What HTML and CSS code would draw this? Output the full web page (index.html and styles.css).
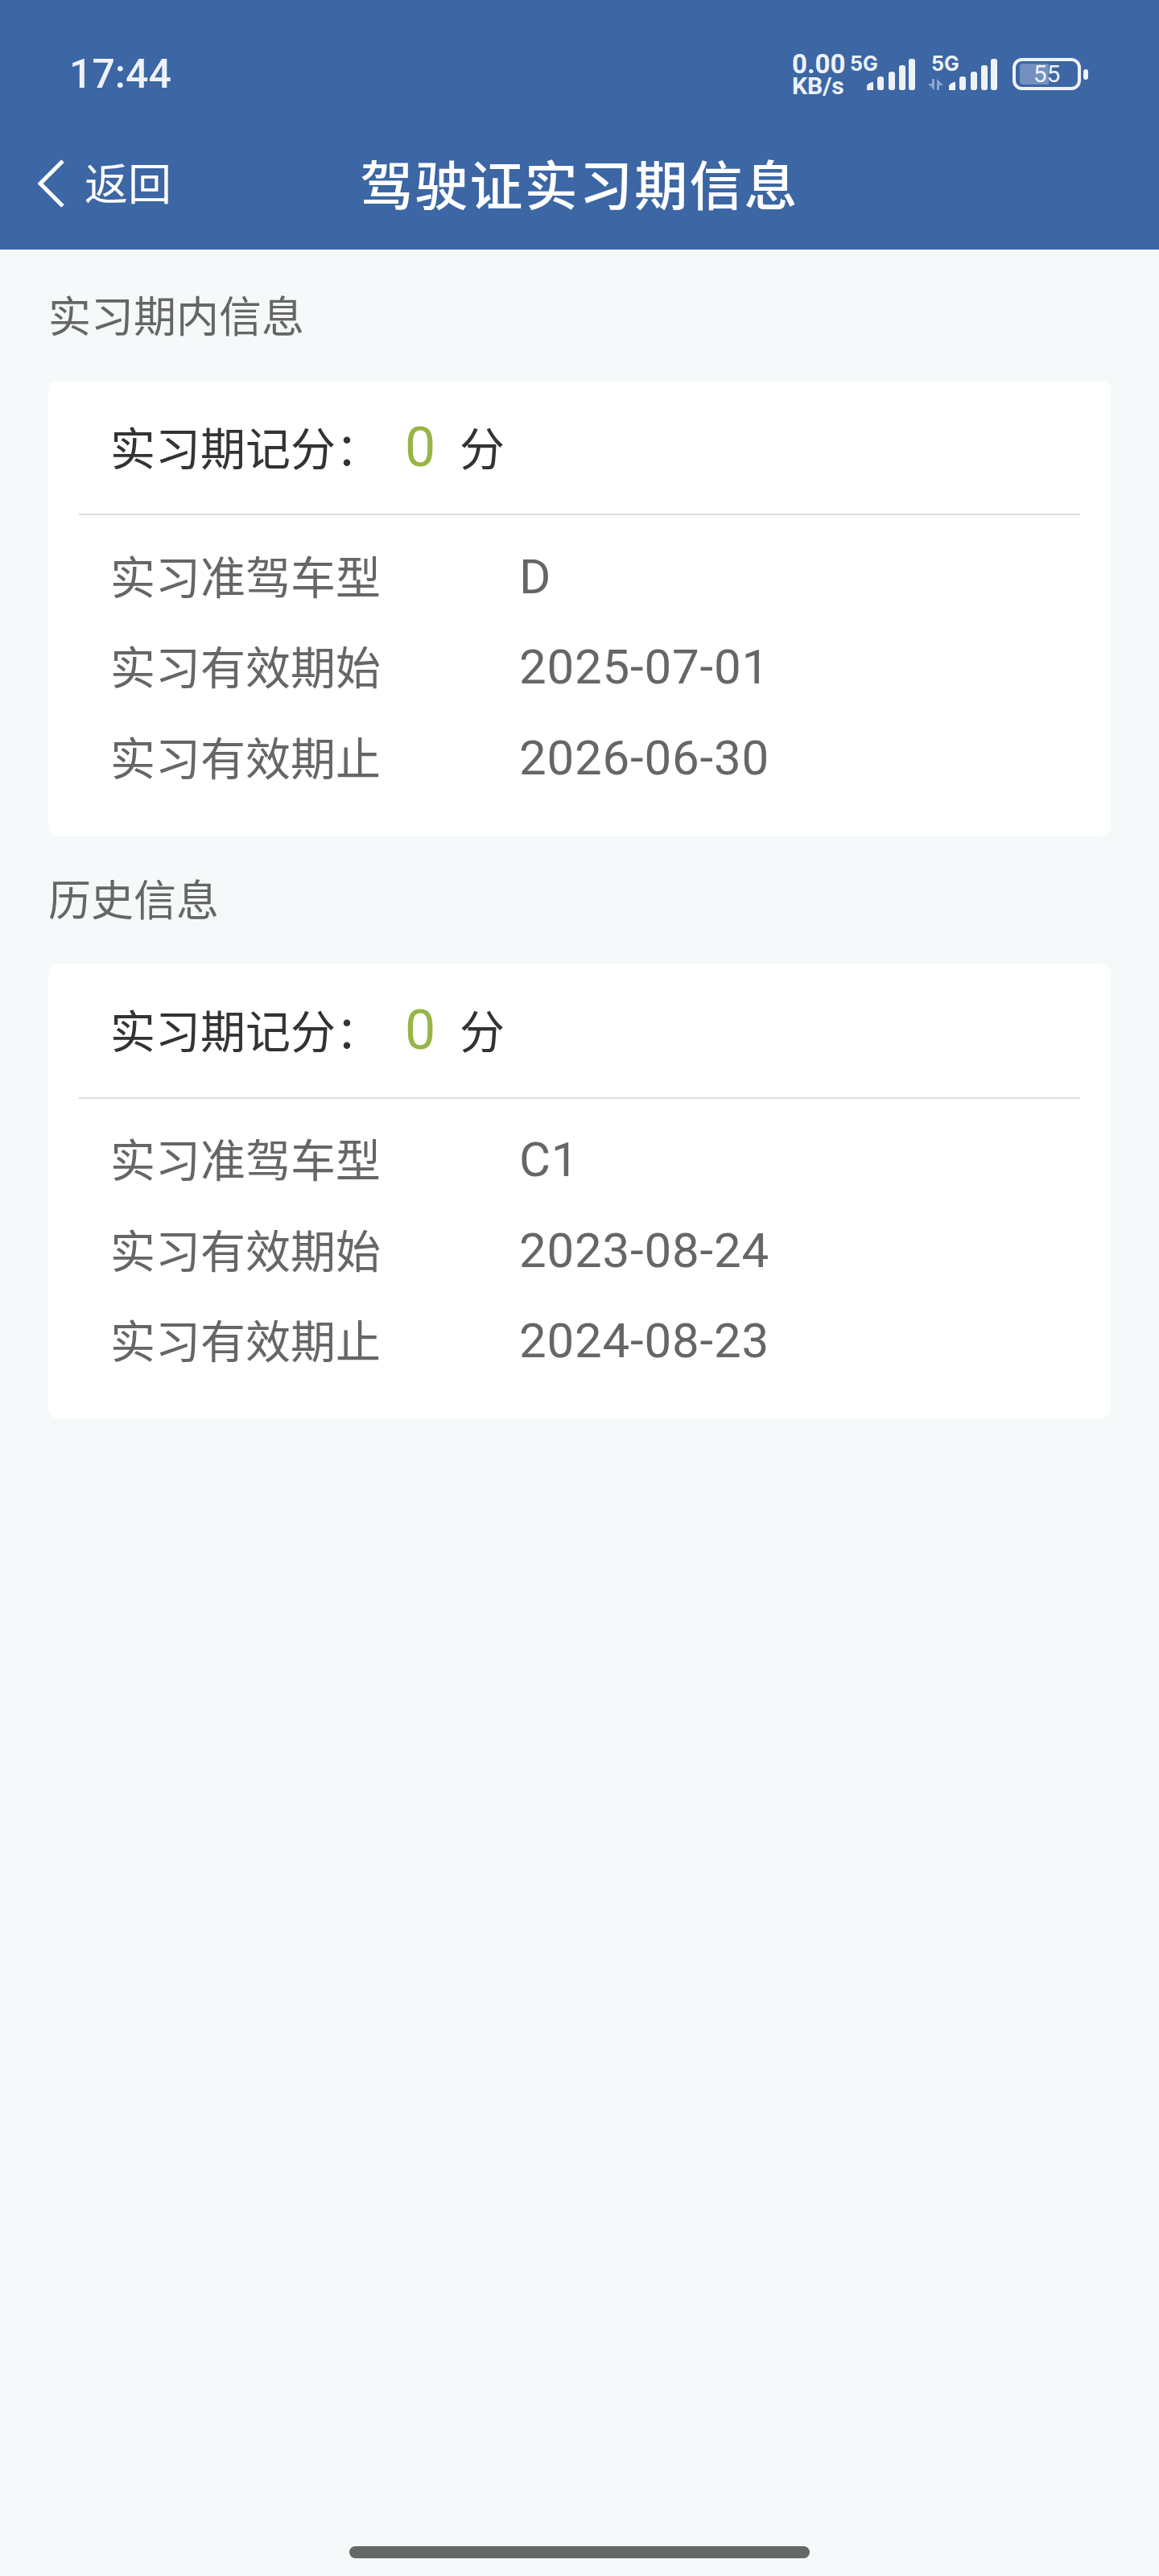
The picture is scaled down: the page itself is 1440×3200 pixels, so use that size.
FILE: index.html
```html
<!DOCTYPE html>
<html lang="zh-CN">
<head>
    <meta charset="UTF-8">
    <meta name="viewport" content="width=device-width, initial-scale=1.0">
    <title>驾驶证实习期信息</title>
    <link rel="stylesheet" href="styles.css">
</head>
<body>
    <header class="top-bar">
        <div class="status-bar">
            <span class="clock">17:44</span>
            <div class="status-icons">
                <div class="speed"><span class="speed-num">0.00</span><span class="speed-unit">KB/s</span></div>
                <div class="sim sim-first">
                    <span class="sim-label">5G</span>
                    <svg class="bars" width="60" height="40" viewBox="0 0 60 40">
                        <path d="M0 40v-5q0-2 2-3l4-2q2-1 2 1v9z" fill="#eef2f9"/>
                        <rect x="13" y="23" width="8" height="17" rx="3" fill="#eef2f9"/>
                        <rect x="27" y="17" width="8" height="23" rx="3" fill="#eef2f9"/>
                        <rect x="40" y="9" width="8" height="31" rx="3" fill="#eef2f9"/>
                        <rect x="52" y="1" width="8" height="39" rx="3" fill="#eef2f9"/>
                    </svg>
                </div>
                <div class="sim sim-second">
                    <span class="sim-label">5G</span>
                    <svg class="arrows" width="19" height="14" viewBox="0 0 19 14">
                        <path d="M8 0v14L0 6h5V0z M11 14V0l8 8h-5v6z" fill="#8ea5cd"/>
                    </svg>
                    <svg class="bars" width="60" height="40" viewBox="0 0 60 40">
                        <path d="M0 40v-5q0-2 2-3l4-2q2-1 2 1v9z" fill="#eef2f9"/>
                        <rect x="13" y="23" width="8" height="17" rx="3" fill="#eef2f9"/>
                        <rect x="27" y="17" width="8" height="23" rx="3" fill="#eef2f9"/>
                        <rect x="40" y="9" width="8" height="31" rx="3" fill="#eef2f9"/>
                        <rect x="52" y="1" width="8" height="39" rx="3" fill="#eef2f9"/>
                    </svg>
                </div>
                <div class="battery">
                    <div class="battery-body">
                        <div class="battery-level"></div>
                        <span class="battery-num">55</span>
                    </div>
                    <div class="battery-cap"></div>
                </div>
            </div>
        </div>
        <nav class="nav-bar">
            <a class="back">
                <svg width="38" height="66" viewBox="0 0 38 66">
                    <path d="M34 5 L6 33 L34 61" fill="none" stroke="#fff" stroke-width="5"/>
                </svg>
                <span>返回</span>
            </a>
            <h1>驾驶证实习期信息</h1>
        </nav>
    </header>

    <main>
        <h2 class="section-title">实习期内信息</h2>
        <section class="card">
            <div class="score-row">
                <span class="score-label">实习期记分：</span>
                <span class="score-num">0</span>
                <span class="score-unit">分</span>
            </div>
            <div class="info-rows">
                <div class="info-row"><span class="info-key">实习准驾车型</span><span class="info-val">D</span></div>
                <div class="info-row"><span class="info-key">实习有效期始</span><span class="info-val">2025-07-01</span></div>
                <div class="info-row"><span class="info-key">实习有效期止</span><span class="info-val">2026-06-30</span></div>
            </div>
        </section>

        <h2 class="section-title">历史信息</h2>
        <section class="card">
            <div class="score-row">
                <span class="score-label">实习期记分：</span>
                <span class="score-num">0</span>
                <span class="score-unit">分</span>
            </div>
            <div class="info-rows">
                <div class="info-row"><span class="info-key">实习准驾车型</span><span class="info-val">C1</span></div>
                <div class="info-row"><span class="info-key">实习有效期始</span><span class="info-val">2023-08-24</span></div>
                <div class="info-row"><span class="info-key">实习有效期止</span><span class="info-val">2024-08-23</span></div>
            </div>
        </section>
    </main>

    <div class="home-bar"></div>
</body>
</html>
```

FILE: styles.css
```css
* {
    box-sizing: border-box;
}
body {
    font-family: "Noto Sans CJK SC", Roboto, sans-serif;
    background-color: #f5f9fa;
    margin: 0;
    width: 1440px;
    height: 3200px;
    display: flex;
    flex-direction: column;
}
.top-bar {
    background-color: #3c66a4;
    height: 310px;
    color: #fff;
}
.status-bar {
    height: 146px;
    padding: 62px 88px 0 86px;
    display: flex;
    justify-content: space-between;
    align-items: flex-start;
}
.clock {
    font-family: Roboto, sans-serif;
    font-weight: 500;
    font-size: 50px;
    line-height: 60px;
    color: #eef2f9;
}
.status-icons {
    display: flex;
    align-items: flex-start;
    color: #eef2f9;
    font-family: Roboto, sans-serif;
    font-weight: 700;
}
.speed {
    display: flex;
    flex-direction: column;
    line-height: 27px;
    margin-top: 4px;
    width: 72px;
}
.speed-num {
    font-size: 33px;
}
.speed-unit {
    font-size: 30px;
}
.sim {
    display: flex;
    align-items: flex-end;
    justify-content: flex-end;
    position: relative;
    height: 42px;
    margin-top: 8px;
}
.sim-first {
    width: 81px;
}
.sim-second {
    width: 86px;
    margin-left: 16px;
}
.sim-second .sim-label {
    left: 4px;
}
.sim-label {
    position: absolute;
    left: 0;
    top: -5px;
    font-family: Inter, Roboto, sans-serif;
    font-size: 25px;
    line-height: 28px;
}
.arrows {
    margin-right: 7px;
}
.battery {
    display: flex;
    align-items: center;
    margin-left: 19px;
    margin-top: 10px;
}
.battery-body {
    width: 85px;
    height: 40px;
    border: 4px solid #eef2f9;
    border-radius: 12px;
    position: relative;
    padding: 3px 5px;
}
.battery-level {
    width: 36px;
    height: 100%;
    background-color: #7390bf;
    border-radius: 4px 0 0 4px;
}
.battery-num {
    position: absolute;
    left: 0;
    right: 0;
    top: 0;
    text-align: center;
    font-weight: 400;
    font-size: 30px;
    line-height: 32px;
}
.battery-cap {
    width: 6px;
    height: 13px;
    background-color: #eef2f9;
    border-radius: 3px;
    margin-left: 3px;
}
.nav-bar {
    height: 160px;
    display: grid;
    grid-template-columns: 1fr auto 1fr;
    align-items: center;
}
.nav-bar h1 {
    grid-column: 2;
    margin: 0;
    font-weight: 500;
    font-size: 66px;
    letter-spacing: 2.2px;
    line-height: 80px;
}
.back {
    padding-left: 44px;
    display: flex;
    align-items: center;
    gap: 23px;
    font-size: 54px;
    line-height: 66px;
}
.back svg {
    margin-top: 4px;
}
main {
    flex: 1;
    padding: 0 60px;
}
.section-title {
    margin: 0;
    font-weight: 400;
    font-size: 53px;
    line-height: 60px;
    color: #666;
    padding-top: 50px;
    padding-bottom: 53px;
}
.card + .section-title {
    padding-top: 47px;
}
.card {
    background-color: #fff;
    border-radius: 12px;
    padding: 0 38px 42px;
}
.score-row {
    height: 167px;
    padding-left: 39px;
    border-bottom: 2px solid #dedede;
    display: flex;
    align-items: center;
    font-size: 56px;
    color: #333;
}
.score-label {
    width: 366px;
    padding-bottom: 5px;
}
.score-num {
    font-family: Roboto, sans-serif;
    font-size: 68px;
    color: #97b546;
    width: 68px;
}
.score-unit {
    padding-bottom: 5px;
}
.info-rows {
    padding-top: 18px;
    padding-left: 39px;
}
.info-row {
    display: flex;
    height: 112.5px;
    align-items: center;
    color: #666;
}
.info-key {
    width: 508px;
    font-size: 56px;
    padding-bottom: 2px;
}
.info-val {
    font-family: Roboto, sans-serif;
    font-size: 60px;
    letter-spacing: 0.8px;
    padding-top: 4px;
}
.home-bar {
    align-self: center;
    margin-bottom: 22px;
    width: 572px;
    height: 15px;
    border-radius: 8px;
    background-color: #666867;
}
```
